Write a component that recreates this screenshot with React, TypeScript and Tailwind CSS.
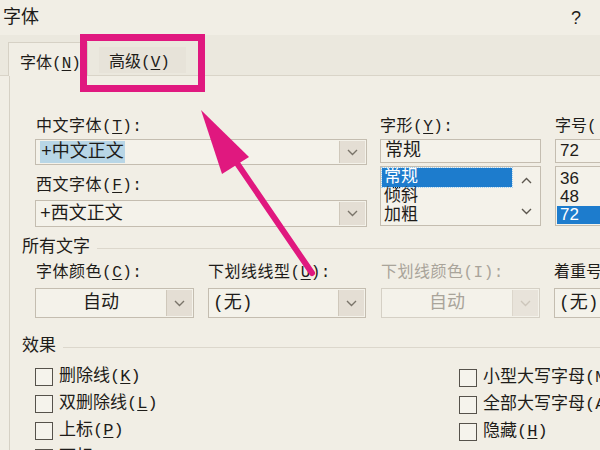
import React from "react";

const Chevron = ({ up = false }: { up?: boolean }) => (
  <svg width="11" height="7" viewBox="0 0 11 7">
    <path
      d={up ? "M1 6 L5.5 1.5 L10 6" : "M1 1 L5.5 5.5 L10 1"}
      fill="none"
      stroke="currentColor"
      strokeWidth="1.4"
    />
  </svg>
);

const Key = ({ k }: { k: string }) => (
  <>
    (<span className="underline underline-offset-2">{k}</span>)
  </>
);

interface ComboProps {
  className: string;
  disabled?: boolean;
  children: React.ReactNode;
}

const Combo: React.FC<ComboProps> = ({ className, disabled, children }) => {
  return (
    <div
      className={`flex border bg-[#f4f2ea] ${
        disabled ? "border-[#d5d0c5]" : "border-[#c4bdb0]"
      } ${className}`}
    >
      <div className="flex-1 min-w-0 flex items-center overflow-hidden">{children}</div>
      <div
        className={`w-[26px] my-px mr-px flex items-center justify-center border-l ${
          disabled
            ? "border-[#dcd6cb] bg-[#e8e3da] text-[#cdc6bb]"
            : "border-[#cfc8bb] bg-[#e4ded4] text-[#7a746a]"
        }`}
      >
        <Chevron />
      </div>
    </div>
  );
};

const Check = ({ children }: { children: React.ReactNode }) => (
  <div className="flex items-center h-[27px]">
    <div className="w-[18px] h-[18px] border border-[#56524b] bg-[#f5f3ec]" />
    <span className="ml-[6px] text-[17px] leading-[20px] whitespace-nowrap">{children}</span>
  </div>
);

const GroupTitle = ({ children, className }: { children: React.ReactNode; className: string }) => (
  <div className={`flex items-center -ml-[13px] h-[20px] ${className}`}>
    <span className="text-[17px] leading-[20px]">{children}</span>
    <div className="flex-1 h-px bg-[#dcd7cc] ml-[7px]" />
  </div>
);

const App = () => {
  return (
    <div className="relative w-[600px] h-[450px] overflow-hidden bg-[#f1eee5] text-[#1e1c19] font-['Liberation_Mono','Noto_Sans_CJK_SC',sans-serif]">
      {/* title bar */}
      <div className="h-[35px] flex items-center justify-between pl-[3px] pr-[19px]">
        <span className="text-[18px] leading-[22px]">字体</span>
        <span className="text-[18px] leading-[22px] font-['Liberation_Sans',sans-serif]">?</span>
      </div>

      {/* tabs */}
      <div className="h-[41px] flex items-end pl-[8px] bg-[#ebe8de] border-b border-[#d9d4c8]">
        <div className="relative -mb-px h-[34px] w-[80px] bg-[#f1eee5] border-l border-t border-r border-[#d6d1c5] flex items-center pt-[9px] pl-[11px] text-[16px] leading-[20px] whitespace-nowrap">
          字体<Key k="N" />
        </div>
        <div className="ml-[11px] mb-[2px] h-[26px] w-[87px] bg-[#e7e3d9] flex items-center pt-[6px] pl-[10px] text-[16px] leading-[20px] whitespace-nowrap">
          高级<Key k="V" />
        </div>
      </div>

      {/* panel */}
      <div className="ml-[9px] border-l border-[#d6d1c5] pl-[25px] pt-[41px] h-[400px]">
        <div className="flex">
          <div className="w-[332px] shrink-0">
            <div className="h-[20px] text-[16px] leading-[20px] pl-px tracking-[0.5px]">
              中文字体<Key k="T" />:
            </div>
            <Combo className="mt-[2px] h-[26px]">
              <span className="ml-[4px] px-px bg-[#b8d6e6] text-[18px] leading-[22px] whitespace-nowrap">+中文正文</span>
            </Combo>
            <div className="mt-[11px] h-[20px] text-[16px] leading-[20px] pl-px tracking-[0.5px]">
              西文字体<Key k="F" />:
            </div>
            <Combo className="mt-[4px] h-[27px]">
              <span className="ml-[4px] text-[18px] leading-[22px] whitespace-nowrap">+西文正文</span>
            </Combo>
          </div>

          <div className="w-[161px] ml-[13px] shrink-0">
            <div className="h-[20px] text-[16px] leading-[20px] tracking-[0.5px]">
              字形<Key k="Y" />:
            </div>
            <div className="mt-[2px] h-[24px] border border-[#c4bdb0] bg-[#f4f2ea] flex items-center pl-[4px] text-[18px] leading-[22px]">
              常规
            </div>
            <div className="mt-[3px] h-[60px] border border-[#c4bdb0] bg-[#f4f2ea] flex overflow-hidden">
              <div className="flex-1 pt-px pl-px">
                <div className="h-[19px] bg-[#1d7ccd] text-white text-[17px] leading-[19px] pl-[2px] outline outline-1 outline-dotted outline-[#9fd0f5]">常规</div>
                <div className="h-[19px] text-[17px] leading-[19px] pl-[2px]">倾斜</div>
                <div className="h-[19px] text-[17px] leading-[19px] pl-[2px]">加粗</div>
              </div>
              <div className="w-[28px] flex flex-col items-center justify-between py-[10px] text-[#5c574f]">
                <Chevron up />
                <Chevron />
              </div>
            </div>
          </div>

          <div className="w-[60px] ml-[14px] shrink-0">
            <div className="h-[20px] text-[16px] leading-[20px] whitespace-nowrap">
              字号(
            </div>
            <div className="mt-[2px] h-[24px] border border-[#c4bdb0] bg-[#f4f2ea] flex items-center pl-[4px] text-[17px] leading-[20px] font-['Liberation_Sans',sans-serif]">
              72
            </div>
            <div className="mt-[3px] h-[60px] border border-[#c4bdb0] bg-[#f4f2ea] pt-[3px] pl-px font-['Liberation_Sans',sans-serif] text-[17px]">
              <div className="h-[18px] leading-[18px] pl-[3px]">36</div>
              <div className="h-[18px] leading-[18px] pl-[3px]">48</div>
              <div className="h-[18px] leading-[18px] pl-[3px] bg-[#1d7ccd] text-white">72</div>
            </div>
          </div>
        </div>

        <GroupTitle className="mt-[11px]">所有文字</GroupTitle>

        <div className="flex mt-[5px]">
          <div className="w-[159px] shrink-0">
            <div className="h-[20px] text-[16px] leading-[20px] pl-px whitespace-nowrap tracking-[0.5px]">
              字体颜色<Key k="C" />:
            </div>
            <Combo className="mt-[5px] h-[30px]">
              <span className="w-full text-center text-[18px] leading-[22px]">自动</span>
            </Combo>
          </div>
          <div className="w-[158px] ml-[14px] shrink-0">
            <div className="h-[20px] text-[16px] leading-[20px] whitespace-nowrap tracking-[0.5px]">
              下划线线型<Key k="U" />:
            </div>
            <Combo className="mt-[5px] h-[30px]">
              <span className="ml-[4px] text-[18px] leading-[22px] whitespace-nowrap">(无)</span>
            </Combo>
          </div>
          <div className="w-[159px] ml-[15px] shrink-0 text-[#a9a49a]">
            <div className="h-[20px] text-[16px] leading-[20px] whitespace-nowrap tracking-[0.5px]">
              下划线颜色(I):
            </div>
            <Combo className="mt-[5px] h-[30px]" disabled>
              <span className="w-full text-center text-[18px] leading-[22px]">自动</span>
            </Combo>
          </div>
          <div className="w-[60px] ml-[14px] shrink-0">
            <div className="h-[20px] text-[16px] leading-[20px] whitespace-nowrap">着重号</div>
            <div className="mt-[5px] h-[30px] border border-[#c4bdb0] bg-[#f4f2ea] flex items-center pl-[4px] text-[18px] leading-[22px] whitespace-nowrap">
              (无)
            </div>
          </div>
        </div>

        <GroupTitle className="mt-[19px]">效果</GroupTitle>

        <div className="flex mt-[6px]">
          <div className="w-[424px] shrink-0">
            <Check>删除线<Key k="K" /></Check>
            <Check>双删除线<Key k="L" /></Check>
            <Check>上标<Key k="P" /></Check>
            <Check>下标<Key k="B" /></Check>
          </div>
          <div className="pt-px">
            <Check>小型大写字母(M)</Check>
            <Check>全部大写字母(A)</Check>
            <Check>隐藏<Key k="H" /></Check>
          </div>
        </div>
      </div>

      {/* annotation: highlight box and arrow */}
      <div className="absolute left-[80px] top-[34px] w-[125px] h-[58px] border-[7px] border-[#e0187f]" />
      <svg className="absolute left-0 top-0 pointer-events-none" width="600" height="450">
        <line x1="312" y1="273" x2="228" y2="150" stroke="#e0187f" strokeWidth="6" strokeLinecap="round" />
        <polygon points="201,110 222,174 249,157" fill="#e0187f" />
      </svg>
    </div>
  );
};

export default App;
